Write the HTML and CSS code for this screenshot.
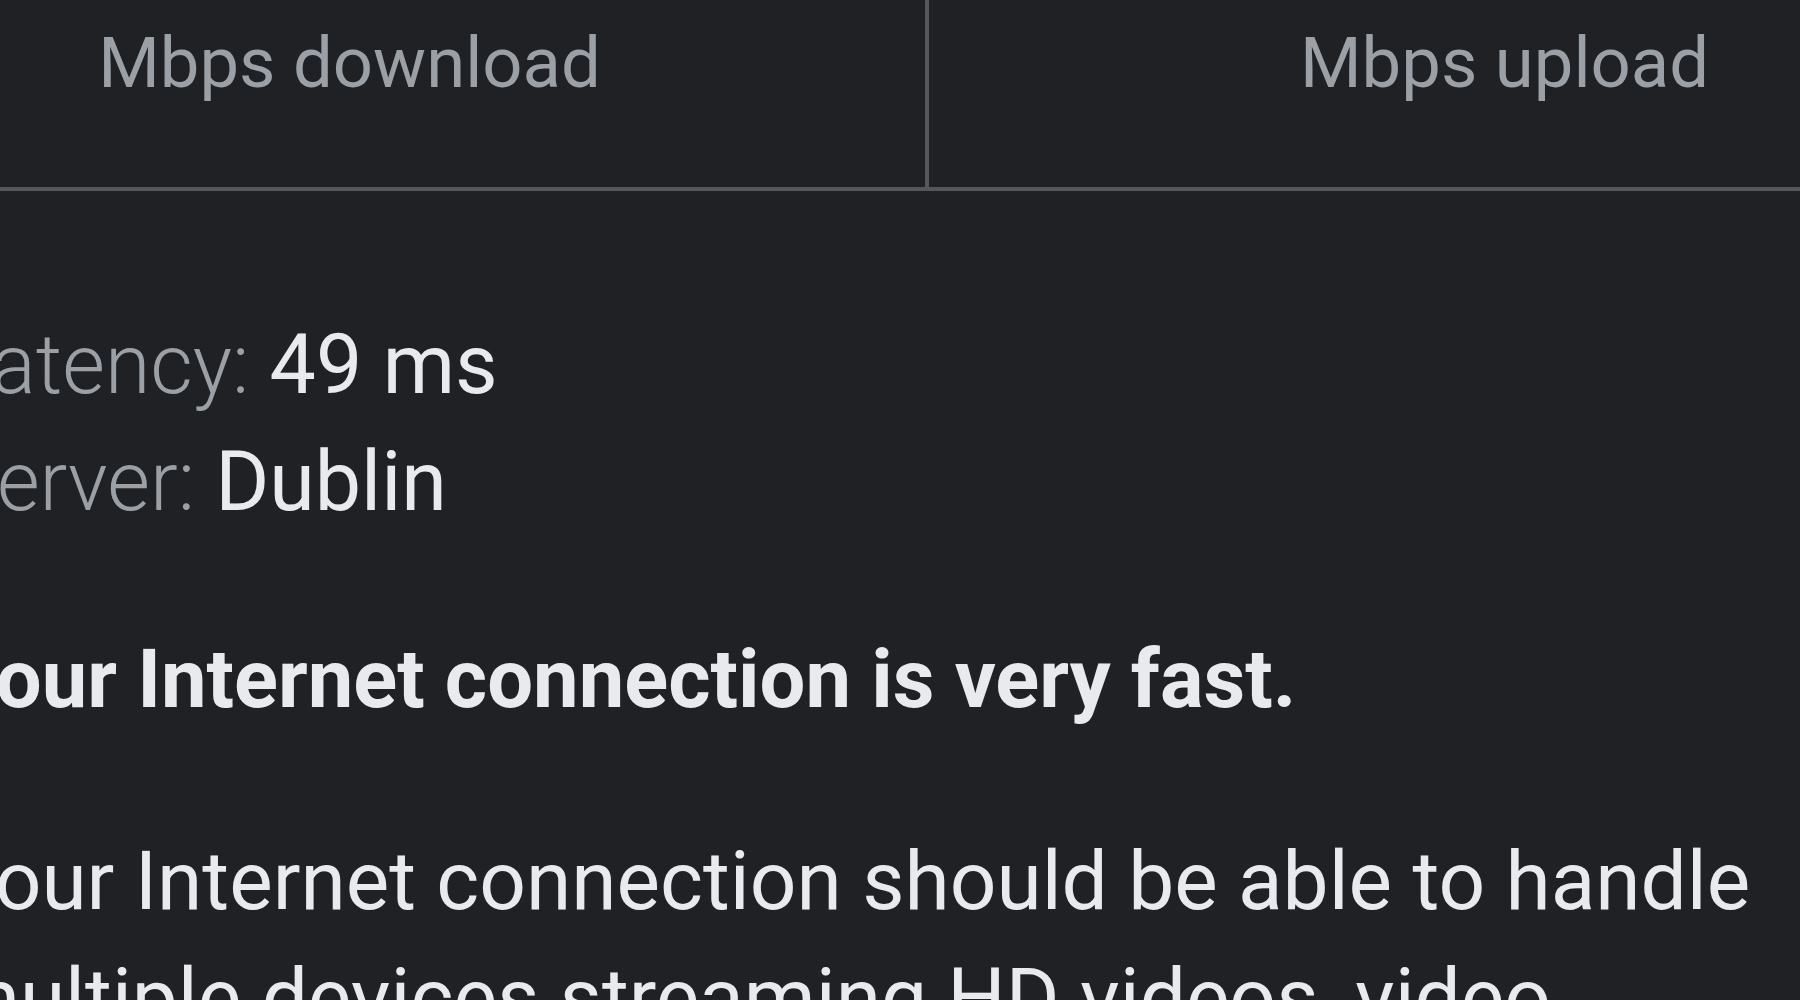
FILE: index.html
```html
<!DOCTYPE html>
<html lang="en">
<head>
<meta charset="utf-8">
<title>Internet speed test</title>
<link rel="stylesheet" href="styles.css">
</head>
<body>
<div class="card">
  <div class="stats">
    <div class="stat stat-download">
      <div class="stat-unit">Mbps download</div>
    </div>
    <div class="stat stat-upload">
      <div class="stat-unit">Mbps upload</div>
    </div>
  </div>
  <div class="details">
    <div class="meta">
      <div class="meta-row"><span class="meta-label">Latency: </span><span class="meta-value">49 ms</span></div>
      <div class="meta-row"><span class="meta-label">Server: </span><span class="meta-value">Dublin</span></div>
    </div>
    <h2 class="verdict">Your Internet connection is very fast.</h2>
    <p class="summary">Your Internet connection should be able to handle multiple devices streaming HD videos, video conferencing and gaming at the same time.</p>
  </div>
</div>
</body>
</html>
```
FILE: styles.css
```css
html, body {
  margin: 0;
  padding: 0;
  overflow: hidden;
  background: #202124;
}

body {
  font-family: Roboto, "Liberation Sans", Arial, sans-serif;
  color: #e8eaed;
  height: 1000px;
}

.card {
  margin-left: -226px;
  width: 2306px;
}

.stats {
  display: grid;
  grid-template-columns: 1151px 4px 1151px;
  border-bottom: 4px solid #54575c;
}

.stat {
  box-sizing: border-box;
  height: 187px;
  padding-top: 13px;
  text-align: center;
}

.stat-download {
  grid-column: 1;
}

.stat-upload {
  grid-column: 3;
  position: relative;
}

.stat-upload::before {
  content: "";
  position: absolute;
  left: -4px;
  top: 0;
  bottom: 0;
  width: 4px;
  background: #54575c;
}

.stat-unit {
  font-size: 70.6px;
  line-height: 100px;
  font-weight: 400;
  color: #9aa0a6;
  white-space: nowrap;
}

.details {
  padding: 116px 0 0 174px;
}

.meta-row {
  font-size: 82.5px;
  line-height: 116.5px;
  white-space: nowrap;
}

.meta-label {
  font-weight: 300;
  color: #9aa0a6;
}

.meta-value {
  font-weight: 400;
  color: #e8eaed;
}

.verdict {
  margin: 82px 0 0;
  font-size: 81.3px;
  line-height: 116.5px;
  font-weight: 700;
  color: #e8eaed;
  white-space: nowrap;
}

.summary {
  margin: 84.5px 0 0;
  width: 1815px;
  font-size: 82px;
  line-height: 116.5px;
  font-weight: 400;
  color: #e8eaed;
}
```
